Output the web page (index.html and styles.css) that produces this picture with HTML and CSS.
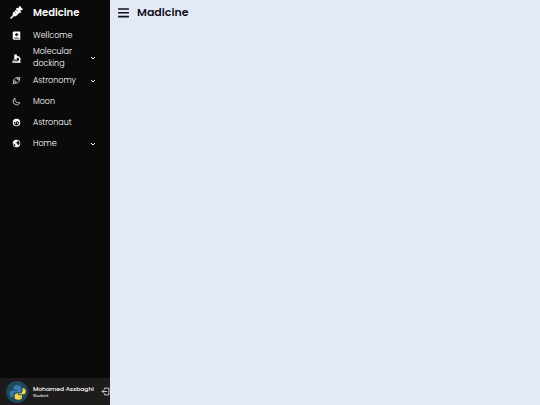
FILE: index.html
```html
<!DOCTYPE html>
<html lang="en">

<head>
    <meta charset="UTF-8">
    <meta name="viewport" content="width=device-width, initial-scale=1.0">
    <title>Medicine</title>
    <link rel="stylesheet" href="styles.css">
</head>

<body>
    <nav class="sidebar">
        <div class="logo-details">
            <svg class="logo-icon" viewBox="0 0 24 24" aria-hidden="true">
                <path d="M18 0l6 6-2 2-1-1-2 2 2 2-2 2-1-1-7 7H7l-5 5-2-2 5-5v-4l7-7-1-1 2-2 2 1 2-2-1-1z" />
                <path class="logo-mark" d="M8 10l3 3M11 7l3 3" />
            </svg>
            <span class="logo-name">Medicine</span>
        </div>

        <ul class="nav-links">
            <li>
                <a href="#">
                    <span class="icon"><svg viewBox="0 0 24 24" aria-hidden="true">
                        <path fill-rule="evenodd" d="M5 1h17v22H5a3 3 0 0 1-3-3V4a3 3 0 0 1 3-3zm6 4v3H8v3h3v3h3v-3h3V8h-3V5zM5 18v2h14v-2z" />
                    </svg></span>
                    <span class="link-name">Wellcome</span>
                </a>
            </li>
            <li>
                <button type="button" aria-expanded="false">
                    <span class="icon"><svg viewBox="0 0 24 24" aria-hidden="true">
                        <path d="M6 1h7v4c6 0 10 4 10 9 0 2-1 4-2 5h2v4H1v-4h14c3-1 4-3 4-5 0-3-3-5-6-5v5H6z" />
                        <path d="M2 15h12v2H2z" />
                    </svg></span>
                    <span class="link-name">Molecular docking</span>
                    <svg class="arrow" viewBox="0 0 24 24" aria-hidden="true"><path d="M6 9l6 6 6-6" /></svg>
                </button>
            </li>
            <li>
                <button type="button" aria-expanded="false">
                    <span class="icon"><svg class="line" viewBox="0 0 24 24" aria-hidden="true">
                        <path d="M4 19C2 9 9 3 20 5c2 9-5 16-16 14z" />
                        <path d="M2 22l3-4M19 7l3-4M14 4c-1 4-1 5 5 6M5 13c5 0 6 1 5 6" />
                    </svg></span>
                    <span class="link-name">Astronomy</span>
                    <svg class="arrow" viewBox="0 0 24 24" aria-hidden="true"><path d="M6 9l6 6 6-6" /></svg>
                </button>
            </li>
            <li>
                <a href="#">
                    <span class="icon"><svg class="line" viewBox="0 0 24 24" aria-hidden="true">
                        <path d="M8 3C0 7 2 20 12 21c4 0 7-2 9-6C12 17 6 11 8 3z" />
                    </svg></span>
                    <span class="link-name">Moon</span>
                </a>
            </li>
            <li>
                <a href="#">
                    <span class="icon"><svg viewBox="0 0 24 24" aria-hidden="true">
                        <path fill-rule="evenodd" d="M12 2a10 10 0 1 0 0 20 10 10 0 0 0 0-20zM5 10c4 1 7 0 9-2 1 2 3 2 5 2 2 13-16 13-14 0z" />
                        <circle cx="9" cy="13" r="2" />
                        <circle cx="15" cy="13" r="2" />
                    </svg></span>
                    <span class="link-name">Astronaut</span>
                </a>
            </li>
            <li>
                <button type="button" aria-expanded="false">
                    <span class="icon"><svg viewBox="0 0 24 24" aria-hidden="true">
                        <path fill-rule="evenodd" d="M12 2a10 10 0 1 0 0 20 10 10 0 0 0 0-20zM4 11l5 5v4c-4-2-6-5-5-9zm11-7c5 2 7 8 3 13l-2-3h-2v-3h-4V9h3V7h2z" />
                    </svg></span>
                    <span class="link-name">Home</span>
                    <svg class="arrow" viewBox="0 0 24 24" aria-hidden="true"><path d="M6 9l6 6 6-6" /></svg>
                </button>
            </li>
        </ul>

        <div class="profile-details">
            <div class="profile-content">
                <svg class="avatar" viewBox="0 0 48 48" role="img" aria-label="Profile">
                    <circle cx="24" cy="24" r="24" fill="#1d4a57" />
                    <path d="M24 9c-6 0-8 2-8 6v4h9v2H13c-4 0-5 4-5 7s2 7 5 7h3v-5c0-4 3-5 6-5h7c3 0 4-2 4-4v-6c0-4-3-6-9-6z" fill="#3b7bb5" />
                    <path d="M27 41c6 0 8-2 8-6v-4h-9v-2h12c4 0 5-4 5-6 0-4-2-7-5-7h-2v5c0 4-3 6-6 6h-6c-4 0-5 2-5 4v5c0 3 3 5 8 5z" fill="#fbd64b" />
                    <circle cx="20" cy="14" r="1" fill="#1d4a57" />
                    <circle cx="31" cy="36" r="1" fill="#1d4a57" />
                </svg>
            </div>
            <div class="name-job">
                <div class="profile-name">Mohamed Assbaghi</div>
                <div class="job">Student</div>
            </div>
            <button class="logout" type="button" aria-label="Log out">
                <svg class="line" viewBox="0 0 24 24" aria-hidden="true">
                    <path d="M9 7V3h12v18H9v-4M16 12H3M7 8l-4 4 4 4" />
                </svg>
            </button>
        </div>
    </nav>

    <main class="home-section">
        <header class="home-content">
            <button class="menu" type="button" aria-label="Menu">
                <svg viewBox="0 0 24 24" aria-hidden="true">
                    <path d="M2 4h20v3H2zM2 11h20v3H2zM2 18h20v3H2z" />
                </svg>
            </button>
            <h1>Madicine</h1>
        </header>
    </main>
</body>

</html>
```

FILE: styles.css
```css
* {
    margin: 0;
    padding: 0;
    box-sizing: border-box;
    font-family: "Poppins", "Inter", sans-serif;
}

body {
    display: flex;
    min-height: 100vh;
    background: #e4e9f7;
}

button {
    border: none;
    background: none;
    cursor: pointer;
}

svg {
    display: block;
    flex-shrink: 0;
    fill: currentColor;
}

.line {
    fill: none;
    stroke: currentColor;
    stroke-width: 2;
}

.sidebar {
    display: flex;
    flex-direction: column;
    flex: 0 0 110px;
    min-width: 0;
    background: #0a0a0a;
    color: #fff;
}

.logo-details {
    display: flex;
    align-items: center;
    height: 25px;
}

.logo-icon {
    width: 13px;
    height: 13px;
    margin: 0 10px;
}

.logo-mark {
    stroke: #0a0a0a;
}

.logo-name {
    font-size: 10px;
    font-weight: 600;
}

.nav-links {
    flex: 1;
    list-style: none;
}

.nav-links a,
.nav-links button {
    display: flex;
    align-items: center;
    width: 100%;
    min-height: 21px;
    color: #fff;
    font-size: 8px;
    font-weight: 300;
    line-height: 12px;
    text-align: left;
    text-decoration: none;
}

.icon {
    display: flex;
    justify-content: center;
    flex: 0 0 33px;
}

.icon svg {
    width: 9px;
    height: 9px;
}

.link-name {
    flex: 1;
}

.arrow {
    width: 8px;
    height: 8px;
    margin: 0 13px;
    fill: none;
    stroke: currentColor;
    stroke-width: 3;
}

.profile-details {
    display: flex;
    align-items: center;
    height: 27px;
    background: #1d1b1b;
}

.profile-content {
    display: flex;
    justify-content: center;
    flex: 0 0 33px;
}

.avatar {
    width: 22px;
    height: 22px;
}

.name-job {
    flex: 1;
    min-width: 0;
    white-space: nowrap;
}

.profile-name {
    font-size: 6px;
    font-weight: 500;
    line-height: 8px;
}

.job {
    font-size: 4px;
    line-height: 6px;
}

.logout {
    color: #fff;
}

.logout svg {
    width: 9px;
    height: 9px;
}

.home-section {
    flex: 1;
}

.home-content {
    display: flex;
    align-items: center;
    gap: 7px;
    height: 25px;
    padding-left: 7px;
}

.menu {
    color: #11101d;
}

.menu svg {
    width: 13px;
    height: 13px;
}

.home-content h1 {
    color: #11101d;
    font-size: 11px;
    font-weight: 600;
}
```
